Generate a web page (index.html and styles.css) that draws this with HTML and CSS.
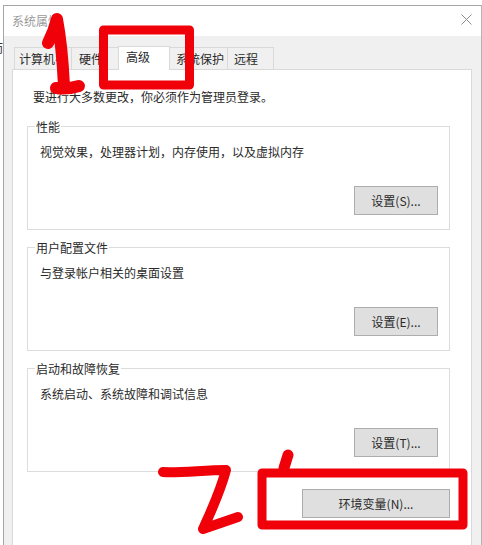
FILE: index.html
```html
<!DOCTYPE html>
<html lang="zh">
<head>
<meta charset="utf-8">
<title>系统属性</title>
<link rel="stylesheet" href="styles.css">
</head>
<body>
<span class="behind">而</span>
<div class="window">
  <div class="titlebar">
    <span class="title">系统属性</span>
    <svg class="close" width="11" height="11" viewBox="0 0 11 11"><path d="M.5.5 10.500 10.500M10.500.5 .5 10.500" stroke="#8a8a8a" stroke-width="1" fill="none"/></svg>
  </div>
  <div class="body">
    <div class="tabs">
      <div class="tab tab-name">计算机名</div>
      <div class="tab tab-hw">硬件</div>
      <div class="tab tab-active">高级</div>
      <div class="tab tab-prot">系统保护</div>
      <div class="tab tab-remote">远程</div>
    </div>
    <div class="panel">
      <p class="notice">要进行大多数更改<span class="comma">，</span>你必须作为管理员登录。</p>
      <section class="group">
        <h2 class="legend">性能</h2>
        <p class="desc">视觉效果<span class="comma">，</span>处理器计划<span class="comma">，</span>内存使用<span class="comma">，</span>以及虚拟内存</p>
        <button class="btn btn-set">设置(S)...</button>
      </section>
      <section class="group">
        <h2 class="legend">用户配置文件</h2>
        <p class="desc">与登录帐户相关的桌面设置</p>
        <button class="btn btn-set">设置(E)...</button>
      </section>
      <section class="group">
        <h2 class="legend">启动和故障恢复</h2>
        <p class="desc">系统启动、系统故障和调试信息</p>
        <button class="btn btn-set">设置(T)...</button>
      </section>
      <div class="footer"><button class="btn btn-env">环境变量(N)...</button></div>
    </div>
  </div>
</div>
<svg class="marks" width="482" height="545" viewBox="0 0 482 545" fill="none" stroke="#f00008" stroke-linecap="round" stroke-linejoin="round">
  <path d="M48 43C52 35 55 27 57 19C61 40 63 65 64 86M56 88C64 89 73 88 79 86" stroke-width="12"/>
  <rect x="103.500" y="30" width="86" height="55" stroke-width="9"/>
  <path d="M163 472C180 473 205 470 226 470C222 485 216 500 208 518C206 522 205 525 203 529M203 529C215 525 226 521 238 517" stroke-width="10"/>
  <rect x="262" y="473" width="201" height="52" stroke-width="9"/>
  <path d="M288 455 284 468" stroke-width="11"/>
</svg>
</body>
</html>
```
FILE: styles.css
```css
html, body {
  margin: 0;
  padding: 0;
  width: 482px;
  height: 545px;
  overflow: hidden;
  background: #fff;
}
body {
  position: relative;
  padding: 5px 0 0 3px;
  box-sizing: border-box;
  font-family: "Noto Sans CJK SC", "Noto Sans", sans-serif;
  font-size: 12px;
  line-height: 16px;
  color: #2a2a2a;
}
.behind {
  position: absolute;
  left: -9px;
  top: 40px;
  color: #333;
}
.window {
  width: 479px;
  height: 540px;
  box-sizing: border-box;
  border: 1px solid #a6a6a6;
  border-bottom: 0;
  border-right-color: #b4b4b4;
  background: #f0f0f0;
}
.titlebar {
  height: 30px;
  background: #fff;
  display: flex;
  align-items: center;
  justify-content: space-between;
  padding: 0 9px 0 8px;
}
.title {
  color: #9a9a9a;
}
.close {
  margin-bottom: 3px;
}
.body {
  padding: 11px 8px 0 8px;
  height: 509px;
  box-sizing: border-box;
}
.tabs {
  display: flex;
  height: 22px;
  align-items: flex-end;
  padding-left: 2px;
}
.tab {
  height: 22px;
  box-sizing: border-box;
  border: 1px solid #d9d9d9;
  border-bottom: 0;
  background: #f0f0f0;
  line-height: 21px;
  margin-left: -1px;
}
.tab-name { width: 58px; margin-left: 0; padding-left: 4px; }
.tab-hw { width: 48px; padding-left: 7px; }
.tab-active {
  width: 52px;
  height: 24px;
  margin-bottom: -1px;
  padding-left: 7px;
  background: #fff;
  line-height: 19px;
  position: relative;
  z-index: 1;
}
.tab-prot { width: 59px; padding-left: 6px; }
.tab-remote { width: 47px; padding-left: 6px; }
.panel {
  width: 460px;
  height: 476px;
  box-sizing: border-box;
  background: #fff;
  border: 1px solid #d9d9d9;
  border-bottom: 0;
  padding: 19px 21px 0 14px;
}
.notice {
  margin: 0 0 21px 6px;
}
.comma {
  font-family: "Noto Sans CJK TC", sans-serif;
}
.group {
  height: 104px;
  box-sizing: border-box;
  border: 1px solid #dcdcdc;
  position: relative;
  padding: 17px 11px 0 12px;
}
.group + .group {
  margin-top: 17px;
}
.legend {
  position: absolute;
  left: 7px;
  top: -8px;
  margin: 0;
  padding: 0 1px;
  background: #fff;
  font-size: 12px;
  font-weight: 400;
  line-height: 16px;
}
.desc {
  margin: 0;
}
.btn {
  display: block;
  font: inherit;
  color: #2a2a2a;
  background: #dfdfdf;
  border: 1px solid #adadad;
  padding: 0;
  height: 29px;
}
.btn-set {
  width: 84px;
  margin: 26px 0 0 auto;
}
.footer {
  display: flex;
  justify-content: flex-end;
  margin-top: 17px;
}
.btn-env {
  width: 148px;
}
.marks {
  position: absolute;
  left: 0;
  top: 0;
}
```
